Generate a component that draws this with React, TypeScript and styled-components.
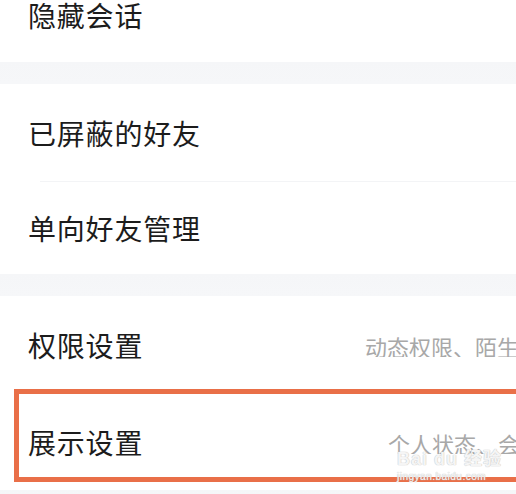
import React from "react";
import styled, { createGlobalStyle } from "styled-components";

const Global = createGlobalStyle`
  html, body { margin: 0; padding: 0; background: #f6f7f9; overflow: hidden; }
  body { font-family: "Noto Sans CJK SC", "Noto Sans", sans-serif; }
`;

const Page = styled.div`
  width: 516px;
  height: 494px;
  overflow: hidden;
  background: #f6f7f9;
`;

const List = styled.div`
  display: flex;
  flex-direction: column;
  margin-top: -32px;
`;

const Group = styled.section`
  display: flex;
  flex-direction: column;
  background: #ffffff;
`;

const Band = styled.div<{ $h: number }>`
  height: ${(p) => p.$h}px;
  background: linear-gradient(#f5f6f8, #f6f7f9);
`;

const Row = styled.div<{ $h: number }>`
  position: relative;
  height: ${(p) => p.$h}px;
  display: grid;
  grid-template-columns: 337px 1fr;
  align-items: center;
  padding-left: 28px;
  background: #ffffff;
`;

const Separator = styled.div`
  height: 1px;
  margin-left: 40px;
  background: #f3f4f6;
`;

const Label = styled.span`
  font-size: 28px;
  line-height: 1;
  color: #1c1c1c;
  letter-spacing: 0.8px;
  white-space: nowrap;
`;

const Hint = styled.span<{ $indent?: number }>`
  font-size: 22px;
  line-height: 1;
  color: #a8a8a8;
  white-space: nowrap;
  overflow: hidden;
  padding-top: 2px;
  padding-left: ${(p) => p.$indent ?? 0}px;
`;

const Highlight = styled.div`
  position: absolute;
  top: -5px;
  left: 14px;
  right: -30px;
  bottom: 8px;
  border: 5px solid #e96f48;
  pointer-events: none;
`;

const Watermark = styled.div`
  position: absolute;
  left: 397px;
  top: 56px;
  display: flex;
  flex-direction: column;
  align-items: flex-start;
  color: rgba(255, 255, 255, 0.85);
  text-shadow: 0 0 1px #c4c4c4, 0 0 1px #c4c4c4;
  pointer-events: none;
`;

const Mark = styled.span`
  font-family: "Liberation Sans", "Noto Sans CJK SC", sans-serif;
  font-size: 18px;
  font-weight: 700;
  line-height: 1;
  letter-spacing: 1px;
`;

const Url = styled.span`
  font-family: "Liberation Sans", sans-serif;
  font-size: 10px;
  line-height: 1;
  margin-top: 4px;
  letter-spacing: 0.5px;
`;

export default function App() {
  return (
    <Page>
      <Global />
      <List>
        <Group>
          <Row $h={94}>
            <Label>隐藏会话</Label>
          </Row>
        </Group>
        <Band $h={22} />
        <Group>
          <Row $h={97}>
            <Label>已屏蔽的好友</Label>
          </Row>
          <Separator />
          <Row $h={92}>
            <Label>单向好友管理</Label>
          </Row>
        </Group>
        <Band $h={22} />
        <Group>
          <Row $h={98}>
            <Label>权限设置</Label>
            <Hint>动态权限、陌生人权限</Hint>
          </Row>
          <Row $h={96}>
            <Label>展示设置</Label>
            <Hint $indent={23}>个人状态、会员身份</Hint>
            <Highlight />
            <Watermark>
              <Mark>Bai du 经验</Mark>
              <Url>jingyan.baidu.com</Url>
            </Watermark>
          </Row>
        </Group>
        <Band $h={20} />
      </List>
    </Page>
  );
}
